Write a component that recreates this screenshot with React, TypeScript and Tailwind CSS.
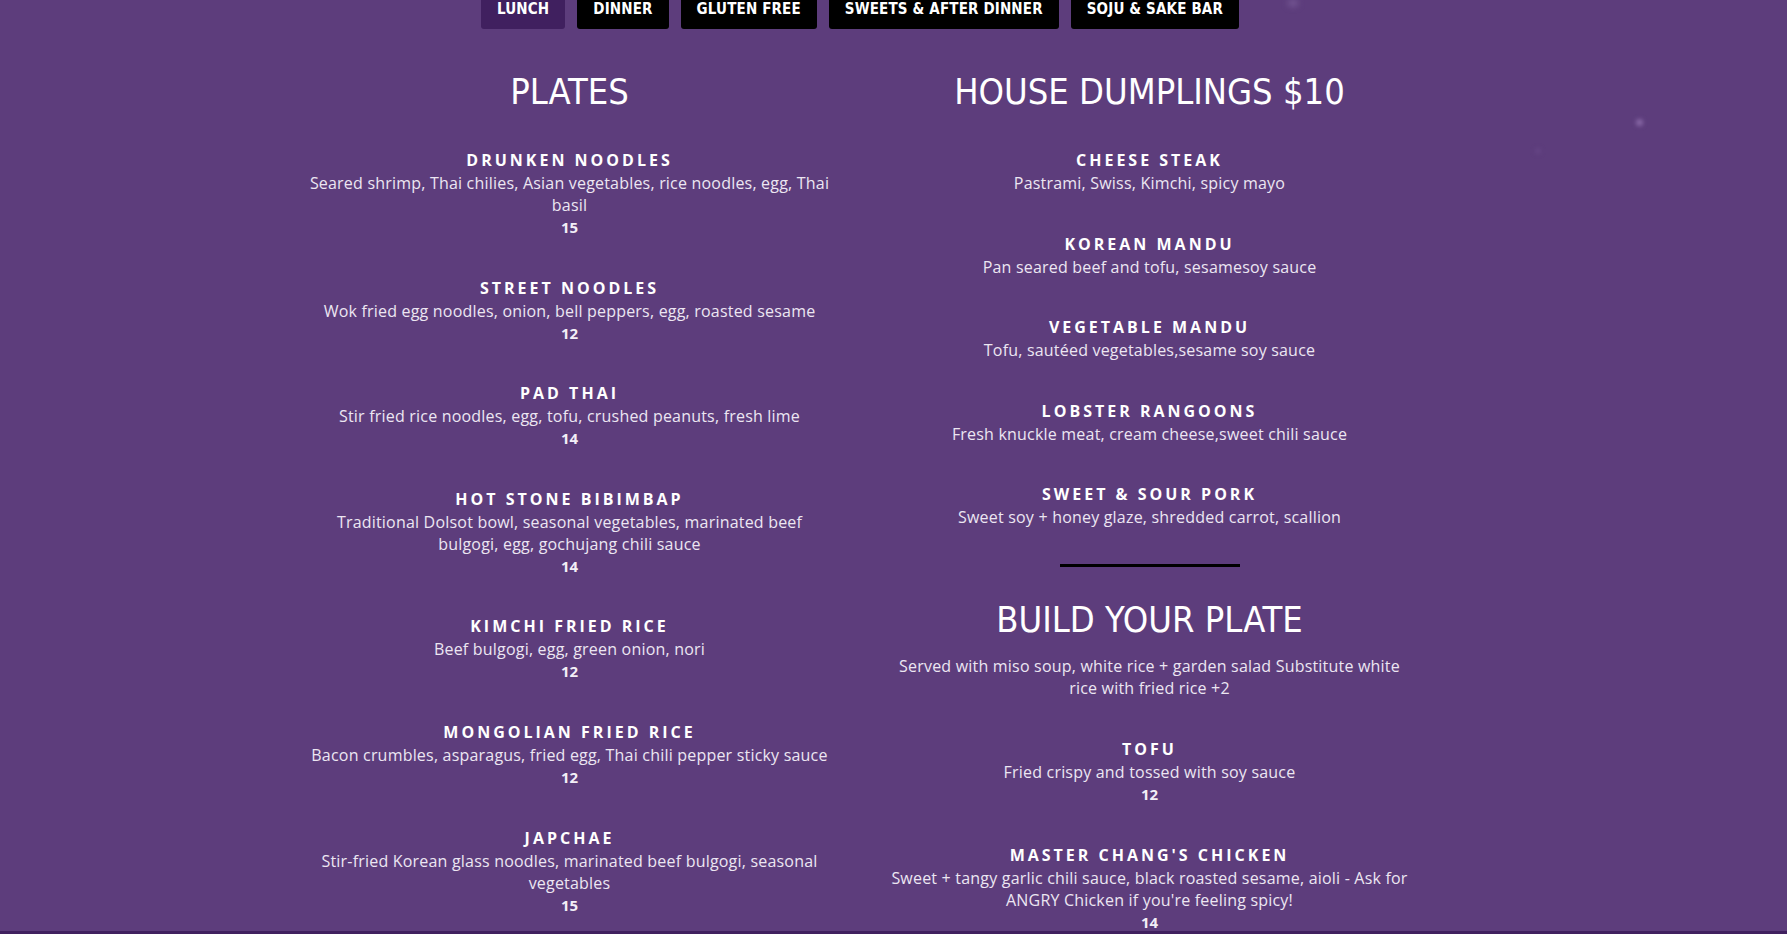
type Item = { name: string; desc: string; price?: string };

const tabs = ['LUNCH', 'DINNER', 'GLUTEN FREE', 'SWEETS & AFTER DINNER', 'SOJU & SAKE BAR'];

const plates: Item[] = [
  { name: 'Drunken Noodles', desc: 'Seared shrimp, Thai chilies, Asian vegetables, rice noodles, egg, Thai basil', price: '15' },
  { name: 'Street Noodles', desc: 'Wok fried egg noodles, onion, bell peppers, egg, roasted sesame', price: '12' },
  { name: 'Pad Thai', desc: 'Stir fried rice noodles, egg, tofu, crushed peanuts, fresh lime', price: '14' },
  { name: 'Hot Stone Bibimbap', desc: 'Traditional Dolsot bowl, seasonal vegetables, marinated beef bulgogi, egg, gochujang chili sauce', price: '14' },
  { name: 'Kimchi Fried Rice', desc: 'Beef bulgogi, egg, green onion, nori', price: '12' },
  { name: 'Mongolian Fried Rice', desc: 'Bacon crumbles, asparagus, fried egg, Thai chili pepper sticky sauce', price: '12' },
  { name: 'Japchae', desc: 'Stir-fried Korean glass noodles, marinated beef bulgogi, seasonal vegetables', price: '15' },
];

const dumplings: Item[] = [
  { name: 'Cheese Steak', desc: 'Pastrami, Swiss, Kimchi, spicy mayo' },
  { name: 'Korean Mandu', desc: 'Pan seared beef and tofu, sesamesoy sauce' },
  { name: 'Vegetable Mandu', desc: 'Tofu, sautéed vegetables,sesame soy sauce' },
  { name: 'Lobster Rangoons', desc: 'Fresh knuckle meat, cream cheese,sweet chili sauce' },
  { name: 'Sweet & Sour Pork', desc: 'Sweet soy + honey glaze, shredded carrot, scallion' },
];

const build: Item[] = [
  { name: 'Tofu', desc: 'Fried crispy and tossed with soy sauce', price: '12' },
  { name: "Master Chang's Chicken", desc: "Sweet + tangy garlic chili sauce, black roasted sesame, aioli - Ask for ANGRY Chicken if you're feeling spicy!", price: '14' },
];

function Heading({ children }: { children: string }) {
  return (
    <h2 className="text-center text-[36px] leading-[40px] text-white font-['DejaVu_Sans_Condensed',sans-serif]">
      {children}
    </h2>
  );
}

function MenuItem({ item }: { item: Item }) {
  return (
    <div className="mt-[37.6px] text-center">
      <h3 className="text-[16px] leading-[24px] font-bold uppercase tracking-[3px] text-white">{item.name}</h3>
      <p className="text-[16px] leading-[22px] tracking-[0.2px] text-[#ece6f2]">{item.desc}</p>
      {item.price && <p className="text-[15px] leading-[22px] font-bold text-[#f3eff7]">{item.price}</p>}
    </div>
  );
}

export default function App() {
  return (
    <div className="relative h-[934px] overflow-hidden bg-[#5d3d7c] border-b-[3px] border-[#40215f] font-['Open_Sans',sans-serif]">
      {/* faint bokeh */}
      <span className="absolute left-[1636px] top-[119px] w-[7px] h-[7px] rounded-full bg-[#8a6aa8] blur-[2px]" />
      <span className="absolute left-[1535px] top-[148px] w-[6px] h-[6px] rounded-full bg-[#654585] blur-[2px]" />
      <span className="absolute left-[1288px] top-[0px] w-[10px] h-[6px] rounded-full bg-[#7a5c98] blur-[3px]" />

      <div className="w-[1120px] ml-[300px]">
        {/* Tabs */}
        <nav className="flex justify-center gap-[12px] -mt-[10px]">
          {tabs.map((t, i) => (
            <div
              key={t}
              className={`h-[39px] px-[16px] flex items-center rounded-b-[3px] text-[15px] font-bold tracking-[0.15px] text-white font-['DejaVu_Sans_Condensed',sans-serif] ${
                i === 0 ? 'bg-[#40205f]' : 'bg-black'
              }`}
            >
              {t}
            </div>
          ))}
        </nav>

        <div className="flex gap-[53px] mt-[43px] ml-[6px]">
          {/* Left column */}
          <section className="w-[527px]">
            <Heading>PLATES</Heading>
            <div className="-mt-[1.6px]">
              {plates.map((p) => (
                <MenuItem key={p.name} item={p} />
              ))}
            </div>
          </section>

          {/* Right column */}
          <section className="w-[527px]">
            <Heading>HOUSE DUMPLINGS $10</Heading>
            <div className="-mt-[1.6px]">
              {dumplings.map((p) => (
                <MenuItem key={p.name} item={p} />
              ))}
            </div>

            <div className="mx-auto mt-[36px] w-[180px] h-[3px] bg-black" />

            <div className="mt-[33px]">
              <Heading>BUILD YOUR PLATE</Heading>
            </div>
            <p className="mt-[15px] text-center text-[16px] leading-[22px] tracking-[0.2px] text-[#ece6f2]">
              Served with miso soup, white rice + garden salad Substitute white rice with fried rice +2
            </p>
            {build.map((p) => (
              <MenuItem key={p.name} item={p} />
            ))}
          </section>
        </div>
      </div>
    </div>
  );
}
